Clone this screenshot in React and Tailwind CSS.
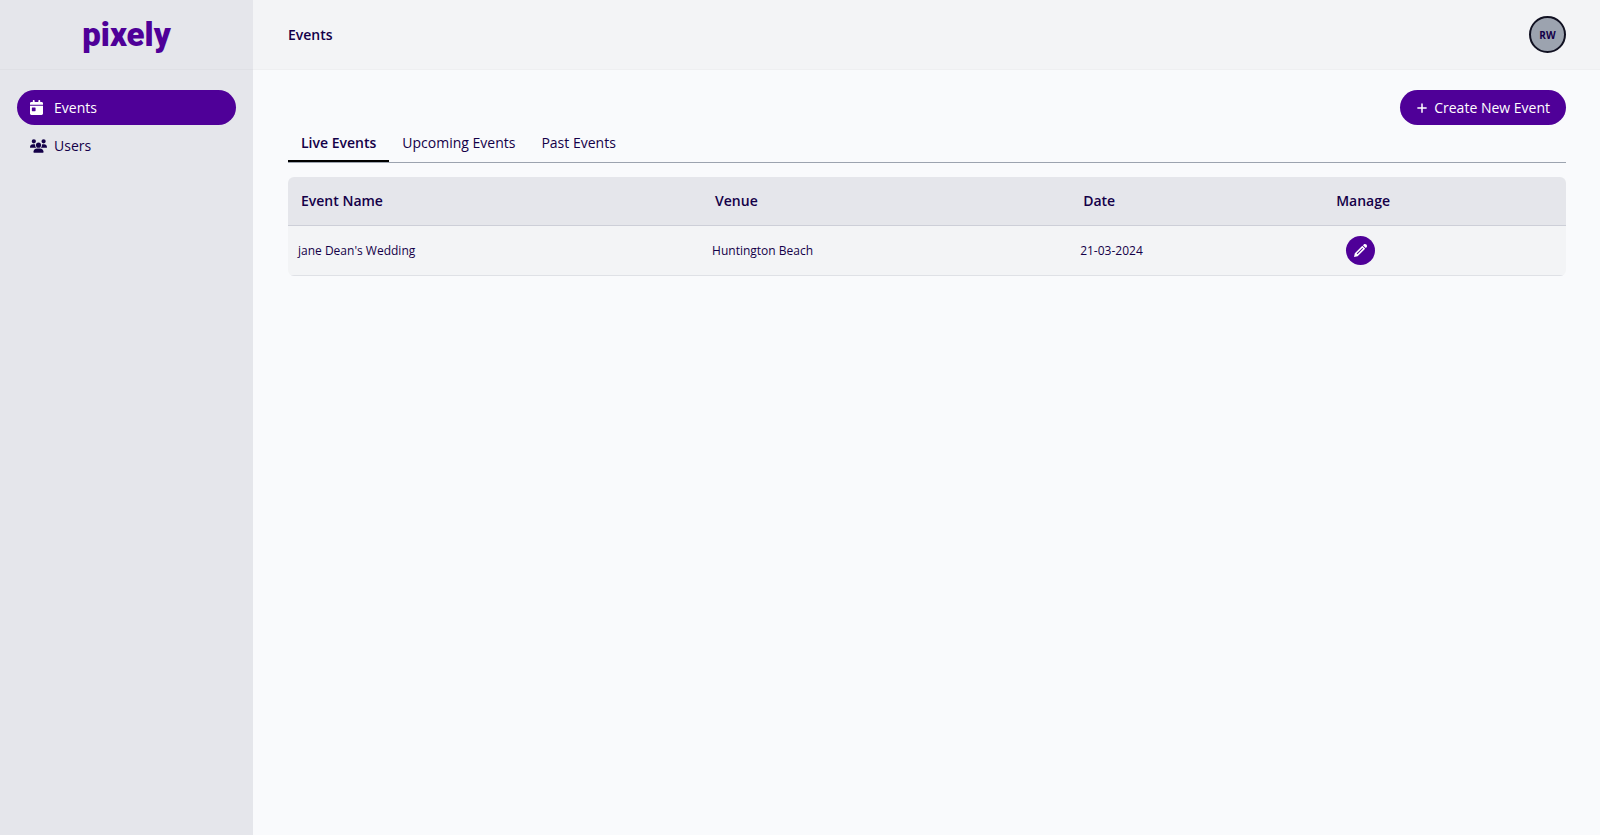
import { useState } from "react";
import { FaCalendarDay, FaPlus, FaUsers } from "react-icons/fa6";
import { ImPencil } from "react-icons/im";

const navItems = [
  { label: "Events", icon: FaCalendarDay, iconClass: "h-[15px] w-[13px] mr-1" },
  { label: "Users", icon: FaUsers, iconClass: "w-[17px] h-[18px]" },
];

const tabs = ["Live Events", "Upcoming Events", "Past Events"];

const events = [
  {
    id: 1,
    tab: "Live Events",
    name: "jane Dean's Wedding",
    venue: "Huntington Beach",
    date: "21-03-2024",
  },
];

const Sidebar = () => (
  <aside className="w-[253px] shrink-0 bg-[#e5e6eb]">
    <div className="flex h-[70px] items-center justify-center border-b border-[#dfe0e5]">
      <a
        href="#"
        className="font-['Roboto',sans-serif] text-[33px] leading-8 font-black text-[#4f0098]"
      >
        pixely
      </a>
    </div>
    <nav className="flex flex-col gap-[3px] px-[17px] py-5">
      {navItems.map(({ label, icon: Icon, iconClass }) => (
        <a
          key={label}
          href="#"
          className={`flex h-[35px] items-center gap-[7px] rounded-full px-[13px] ${
            label === "Events" ? "bg-[#4f0098] text-white" : ""
          }`}
        >
          <Icon className={iconClass} />
          {label}
        </a>
      ))}
    </nav>
  </aside>
);

const Header = () => (
  <header className="flex h-[70px] items-center justify-between border-b border-[#eeeff1] bg-[#f3f4f6] pr-[34px] pl-[35px]">
    <h1 className="font-semibold">Events</h1>
    <button
      type="button"
      className="size-[37px] rounded-full border-2 border-[#111122] bg-[#9ca3af] text-[10px] font-bold"
    >
      RW
    </button>
  </header>
);

const EventTable = ({ rows }) => (
  <table className="mt-[14px] w-full table-fixed border-separate border-spacing-0 overflow-hidden rounded-md text-left">
    <thead className="bg-[#e5e6eb]">
      <tr className="h-[49px]">
        <th className="w-[32.4%] border-b border-[#cdcfd8] px-[13px] font-semibold">
          Event Name
        </th>
        <th className="w-[28.8%] border-b border-[#cdcfd8] px-[13px] font-semibold">
          Venue
        </th>
        <th className="w-[19.8%] border-b border-[#cdcfd8] px-[13px] font-semibold">
          Date
        </th>
        <th className="border-b border-[#cdcfd8] px-[13px] font-semibold">
          Manage
        </th>
      </tr>
    </thead>
    <tbody className="bg-[#f3f4f6] text-[12px]">
      {rows.map((event) => (
        <tr key={event.id} className="h-[50px]">
          <td className="border-b border-[#dfe1e6] px-[10px]">{event.name}</td>
          <td className="border-b border-[#dfe1e6] px-[10px]">{event.venue}</td>
          <td className="border-b border-[#dfe1e6] px-[10px]">{event.date}</td>
          <td className="border-b border-[#dfe1e6] px-[23px]">
            <button
              type="button"
              aria-label={`Edit ${event.name}`}
              className="flex size-[29px] items-center justify-center rounded-full bg-[#4f0098] text-white"
            >
              <ImPencil className="size-[13px]" />
            </button>
          </td>
        </tr>
      ))}
    </tbody>
  </table>
);

const App = () => {
  const [activeTab, setActiveTab] = useState("Live Events");

  return (
    <div className="flex min-h-screen bg-[#f9fafc] font-['Open_Sans',sans-serif] text-[14px] leading-5 text-[#140048]">
      <Sidebar />
      <div className="min-w-0 flex-1">
        <Header />
        <main className="pt-5 pr-[34px] pl-[35px]">
          <div className="flex justify-end">
            <button
              type="button"
              className="flex h-[35px] items-center gap-[6px] rounded-full bg-[#4f0098] px-4 text-white"
            >
              <FaPlus className="size-3" />
              Create New Event
            </button>
          </div>

          <div className="mt-px flex border-b border-[#9ca3af]">
            {tabs.map((tab) => (
              <button
                key={tab}
                type="button"
                onClick={() => setActiveTab(tab)}
                className={`h-9 border-b-2 px-[13px] ${
                  activeTab === tab
                    ? "border-black font-semibold"
                    : "border-transparent"
                }`}
              >
                {tab}
              </button>
            ))}
          </div>

          <EventTable rows={events.filter((e) => e.tab === activeTab)} />
        </main>
      </div>
    </div>
  );
};

export default App;
